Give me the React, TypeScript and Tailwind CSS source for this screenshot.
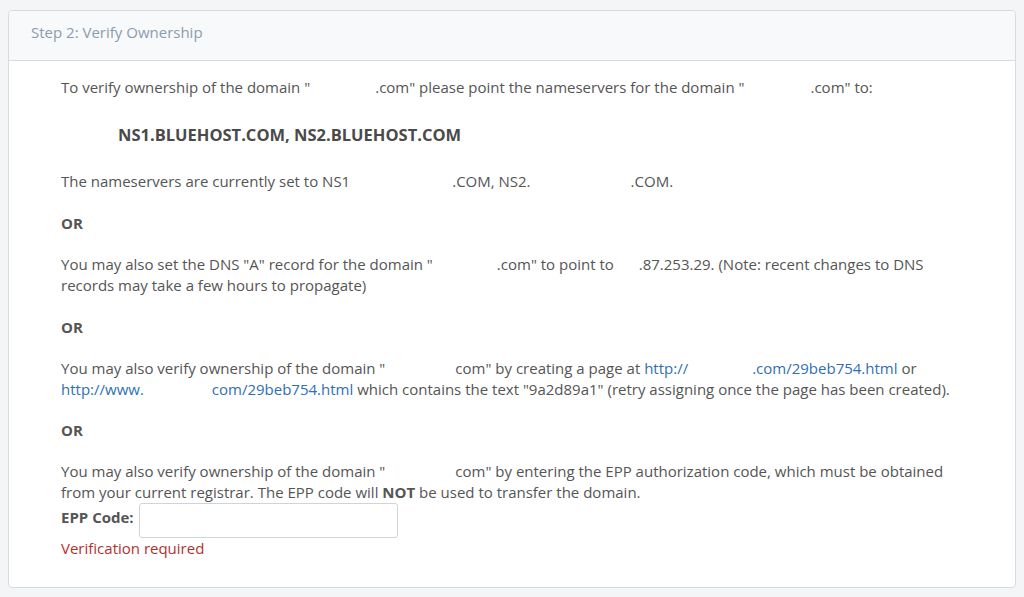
import React from "react";

function Blank({ w }: { w: string }) {
  return <span className={`inline-block ${w}`} />;
}

export default function App() {
  return (
    <div
      className="min-h-screen bg-[#f4f5f7] pt-[10px] px-[8px]"
      style={{ fontFamily: '"Open Sans", "Liberation Sans", sans-serif' }}
    >
      <div className="h-[578px] rounded-[4px] border border-[#d6dbe1] bg-white overflow-hidden">
        {/* header */}
        <div className="h-[50px] pt-[11px] px-[22px] bg-[#f8f9fb] border-b border-[#d6dbe1] text-[15px] leading-[21px] text-[#8b9cb0]">
          Step 2: Verify Ownership
        </div>

        {/* body */}
        <div className="pl-[52px] pr-[50px] pt-[16px] text-[15px] leading-[21px] text-[#555555]">
          <p>
            To verify ownership of the domain "<Blank w="w-[65px]" />.com" please point the
            nameservers for the domain "<Blank w="w-[66px]" />.com" to:
          </p>

          <div className="mt-[26px] mb-[26px] pl-[57px] text-[16.5px] leading-[21px] font-bold text-[#4a4a4a]">
            NS1.BLUEHOST.COM, NS2.BLUEHOST.COM
          </div>

          <p>
            The nameservers are currently set to NS1<Blank w="w-[102px]" />.COM, NS2.
            <Blank w="w-[100px]" />.COM.
          </p>

          <p className="mt-[20.5px] font-bold">OR</p>

          <p className="mt-[20.5px]">
            You may also set the DNS "A" record for the domain "<Blank w="w-[64px]" />.com" to
            point to <Blank w="w-[21px]" />.87.253.29. (Note: recent changes to DNS records may
            take a few hours to propagate)
          </p>

          <p className="mt-[20.5px] font-bold">OR</p>

          <p className="mt-[20.5px]">
            You may also verify ownership of the domain "<Blank w="w-[70px]" />com" by creating a
            page at{" "}
            <a className="text-[#2f6fb3] whitespace-nowrap">
              http://<Blank w="w-[64px]" />.com/29beb754.html
            </a>{" "}
            or{" "}
            <a className="text-[#2f6fb3] whitespace-nowrap">
              http://www.<Blank w="w-[68px]" />com/29beb754.html
            </a>{" "}
            which contains the text "9a2d89a1" (retry assigning once the page has been created).
          </p>

          <p className="mt-[20px] font-bold">OR</p>

          <p className="mt-[20px]">
            You may also verify ownership of the domain "<Blank w="w-[70px]" />com" by entering
            the EPP authorization code, which must be obtained from your current registrar. The
            EPP code will <b>NOT</b> be used to transfer the domain.
          </p>

          <div className="flex items-center gap-[5px] h-[35px]">
            <span className="font-bold -mt-[6px]">EPP Code:</span>
            <input
              type="text"
              className="w-[259px] h-[35px] rounded-[3px] border border-[#cfd4da] bg-white"
            />
          </div>

          <p className="text-[#b3302e]">Verification required</p>
        </div>
      </div>
    </div>
  );
}
